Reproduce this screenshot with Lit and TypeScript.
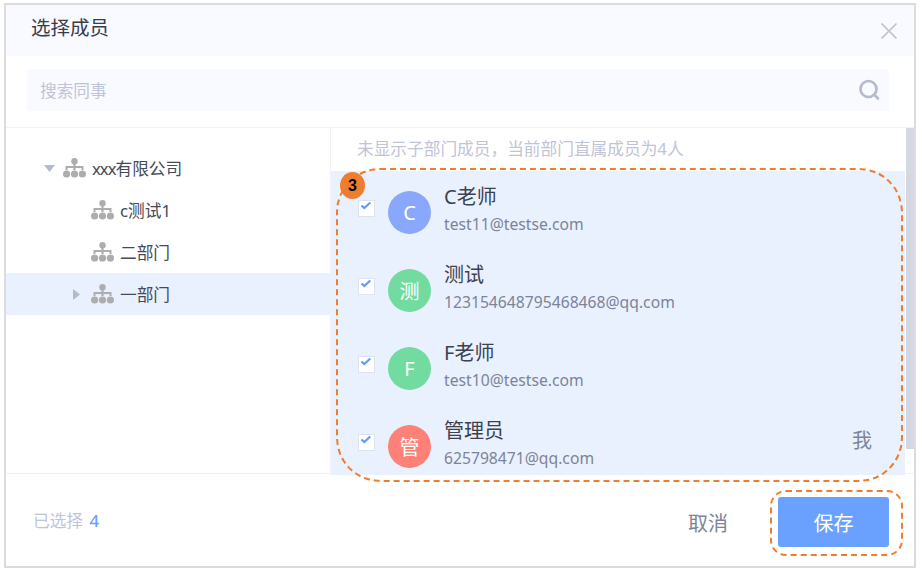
import { LitElement, html, css, svg } from "lit";
import { customElement } from "lit/decorators.js";

const org = svg`<svg class="org" width="23" height="20" viewBox="0 0 23 20" fill="#adadad"><circle cx="11.5" cy="3.2" r="3.2"/><path d="M10.4 5h2.2v3h7.9v4h-2v-2h-5.9v2h-2.2v-2H4.5v2h-2V8h7.9z"/><circle cx="3.6" cy="16" r="3.6"/><circle cx="11.5" cy="16" r="3.6"/><circle cx="19.4" cy="16" r="3.6"/></svg>`;

const members = [
  { n: "C老师", e: "test11@testse.com", a: "C", c: "#8aa8fb" },
  { n: "测试", e: "123154648795468468@qq.com", a: "测", c: "#72dba0" },
  { n: "F老师", e: "test10@testse.com", a: "F", c: "#72dba0" },
  { n: "管理员", e: "625798471@qq.com", a: "管", c: "#fd8177", me: true },
];

@customElement("app-root")
export class AppRoot extends LitElement {
  static styles = css`
    :host {
      display: block;
      width: 922px;
      height: 574px;
      position: relative;
      overflow: hidden;
      background: #fff;
      font-family: "Noto Sans", "Noto Sans CJK SC", sans-serif;
      color: #3d4354;
    }
    .dialog {
      position: absolute;
      left: 4px;
      top: 3px;
      width: 908px;
      height: 561px;
      border: 2px solid #dcdcdc;
      display: flex;
      flex-direction: column;
      background: #fff;
    }
    .head {
      height: 51px;
      flex: none;
      background: #f9faff;
      display: flex;
      align-items: center;
      justify-content: space-between;
      padding: 0 16px 0 25px;
      font-size: 19.5px;
      color: #383d4a;
    }
    .title { margin-bottom: 9px; }
    .search-wrap {
      flex: none;
      height: 72px;
      padding: 13px 25px 16px 21px;
      box-sizing: border-box;
      border-bottom: 1px solid #f0f2f5;
    }
    .search {
      height: 42px;
      background: #f9faff;
      border-radius: 2px;
      display: flex;
      align-items: center;
      justify-content: space-between;
      padding: 0 9px 0 13px;
      font-size: 16.7px;
      color: #bfc4d6;
    }
    .body {
      flex: none;
      height: 346px;
      box-sizing: border-box;
      display: flex;
      border-bottom: 1px solid #f0f2f5;
    }
    .tree {
      width: 324px;
      flex: none;
      border-right: 1px solid #f0f2f5;
      padding-top: 19px;
      font-size: 16.7px;
      color: #444a5a;
    }
    .node {
      height: 42px;
      display: flex;
      align-items: center;
      box-sizing: border-box;
    }
    .node.sel { background: #e9f1ff; }
    .arrow {
      width: 12px;
      flex: none;
      display: flex;
      justify-content: center;
    }
    .gap { width: 8px; flex: none; }
    .org { flex: none; margin-right: 6px; }
    .tight { letter-spacing: -1px; }
    .l0 { padding-left: 37px; }
    .l1 { padding-left: 85px; }
    .l1a { padding-left: 64px; }
    .l1a .arrow { margin-right: 9px; }
    .right {
      flex: 1;
      min-width: 0;
      position: relative;
      display: flex;
      flex-direction: column;
    }
    .hint {
      height: 43px;
      flex: none;
      box-sizing: border-box;
      padding: 8px 0 0 26px;
      font-size: 16.7px;
      line-height: 26px;
      color: #bfc4d6;
    }
    .list {
      height: 304px;
      flex: none;
      overflow: hidden;
      margin-right: 9px;
      background: #e9f1ff;
    }
    .row {
      height: 78px;
      display: flex;
      box-sizing: border-box;
      position: relative;
    }
    .check {
      width: 17px;
      height: 17px;
      margin: 29px 0 0 27px;
      flex: none;
      background: #fff;
      border: 1px solid #dde2ee;
      box-sizing: border-box;
      display: block;
    }
    .check svg { display: block; }
    .avatar {
      width: 43px;
      height: 43px;
      border-radius: 50%;
      flex: none;
      margin: 20px 0 0 13px;
      color: #fff;
      font-size: 20px;
      display: flex;
      align-items: center;
      justify-content: center;
    }
    .info { margin-left: 13px; padding-top: 12px; }
    .name { font-size: 20px; line-height: 28px; color: #3c4150; }
    .mail { font-size: 15.7px; line-height: 26px; color: #7d8398; white-space: nowrap; }
    .me {
      position: absolute;
      right: 33px;
      top: 22px;
      font-size: 20px;
      line-height: 28px;
      color: #7d8398;
    }
    .scroll {
      position: absolute;
      right: 0;
      top: 0;
      width: 8px;
      height: 321px;
      background: #d4d8e3;
    }
    .foot {
      flex: 1;
      display: flex;
      align-items: center;
      padding: 0 25px 0 27px;
    }
    .count { font-size: 16.7px; color: #bfc4d6; }
    .count b { font-weight: 500; color: #6aa1ff; margin-left: 2px; }
    .cancel {
      margin: 4px 50px 0 auto;
      font-size: 20px;
      color: #7d8398;
    }
    .save {
      width: 111px;
      height: 50px;
      margin-top: 4px;
      background: #6aa1ff;
      border-radius: 3px;
      color: #fff;
      font-size: 20px;
      display: flex;
      align-items: center;
      justify-content: center;
    }
    .mark {
      position: absolute;
      border: 2px dashed #ee7d2f;
      box-sizing: border-box;
      pointer-events: none;
    }
    .mark.list-mark { left: 336px; top: 168px; width: 567px; height: 314px; border-radius: 44px; }
    .mark.btn-mark { left: 770px; top: 490px; width: 133px; height: 66px; border-radius: 16px; }
    .badge {
      position: absolute;
      left: 340px;
      top: 172px;
      width: 25px;
      height: 27px;
      border-radius: 50%;
      background: #ee7d2f;
      color: #000;
      font-family: "Liberation Sans", sans-serif;
      font-size: 16px;
      font-weight: 700;
      display: flex;
      align-items: center;
      justify-content: center;
    }
  `;

  render() {
    return html`
      <div class="dialog">
        <div class="head">
          <span class="title">选择成员</span>
          <svg width="18" height="18" viewBox="0 0 18 18" fill="none" stroke="#bdc1d1" stroke-width="1.7"><path d="M1.5 1.5l15 15M16.5 1.5l-15 15"/></svg>
        </div>
        <div class="search-wrap">
          <div class="search">
            <span>搜索同事</span>
            <svg width="22" height="22" viewBox="0 0 22 22" fill="none" stroke="#b5bacd" stroke-width="2.7"><circle cx="10.5" cy="10" r="8"/><path d="M16.5 16l3.5 3.5" stroke-linecap="round"/></svg>
          </div>
        </div>
        <div class="body">
          <div class="tree">
            <div class="node l0">
              <span class="arrow"><svg width="11" height="7" viewBox="0 0 11 7"><path d="M0 0h11L5.5 7z" fill="#b4bace"/></svg></span>
              <span class="gap"></span>${org}<span><span class="tight">xxx</span>有限公司</span>
            </div>
            <div class="node l1">${org}<span>c测试1</span></div>
            <div class="node l1">${org}<span>二部门</span></div>
            <div class="node l1a sel">
              <span class="arrow"><svg width="7" height="11" viewBox="0 0 7 11"><path d="M0 0l7 5.5L0 11z" fill="#b4bace"/></svg></span>
              ${org}<span>一部门</span>
            </div>
          </div>
          <div class="right">
            <div class="hint">未显示子部门成员，当前部门直属成员为4人</div>
            <div class="list">
              ${members.map(
                (m) => html`<div class="row">
                  <span class="check"><svg width="15" height="15" viewBox="0 0 15 15"><path d="M2.5 4.5l2.8 2.6 6-5.6" fill="none" stroke="#5f9bfb" stroke-width="2.2"/></svg></span>
                  <div class="avatar" style="background:${m.c}">${m.a}</div>
                  <div class="info">
                    <div class="name">${m.n}</div>
                    <div class="mail">${m.e}</div>
                  </div>
                  ${m.me ? html`<span class="me">我</span>` : ""}
                </div>`
              )}
            </div>
            <div class="scroll"></div>
          </div>
        </div>
        <div class="foot">
          <span class="count">已选择 <b>4</b></span>
          <span class="cancel">取消</span>
          <div class="save">保存</div>
        </div>
      </div>
      <div class="mark list-mark"></div>
      <div class="mark btn-mark"></div>
      <div class="badge">3</div>
    `;
  }
}
